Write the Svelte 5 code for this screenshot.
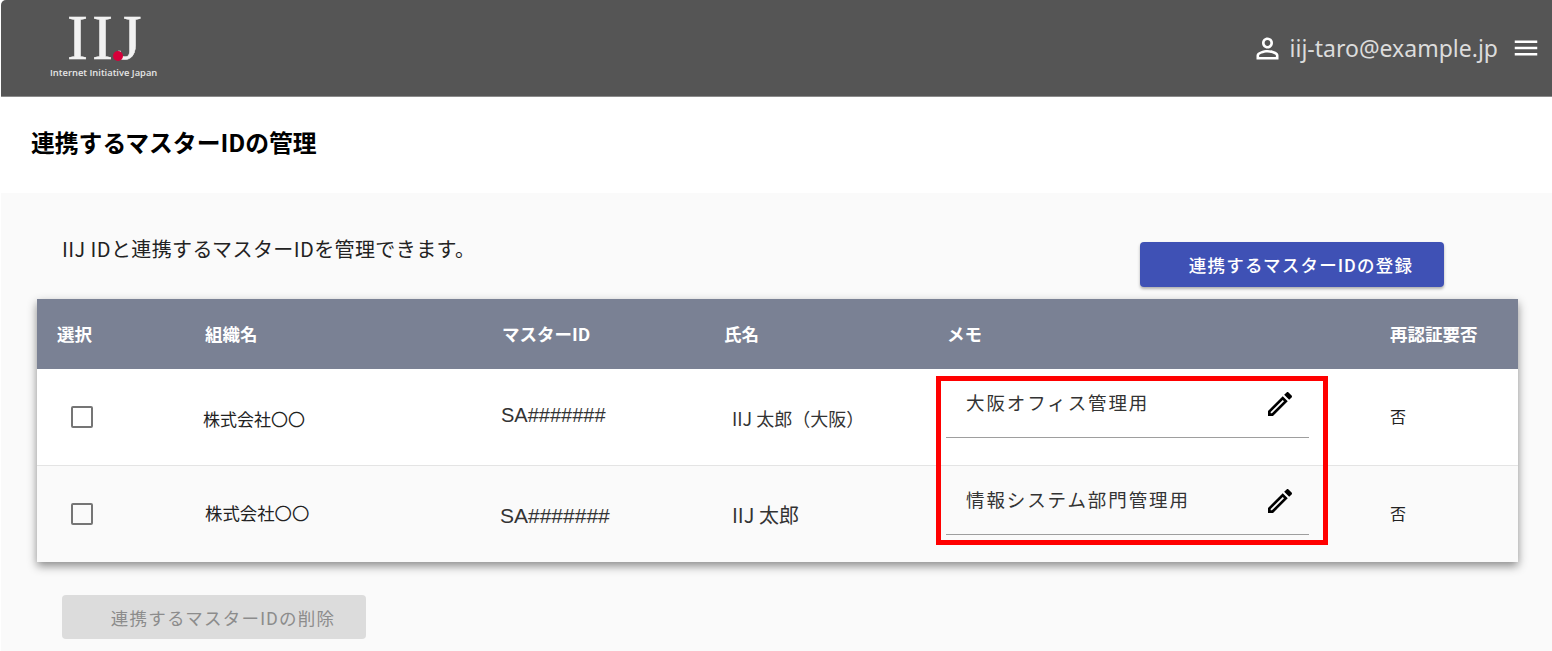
<script>
  const rows = [
    { org: '株式会社〇〇', id: 'SA#######', name: 'IIJ 太郎（大阪）', memo: '大阪オフィス管理用', auth: '否' },
    { org: '株式会社〇〇', id: 'SA#######', name: 'IIJ 太郎', memo: '情報システム部門管理用', auth: '否' }
  ];
</script>

<div class="page">
  <header class="topbar">
    <div class="logo">
      <div class="mark">IIJ<span class="dot"></span></div>
      <div class="tagline">Internet Initiative Japan</div>
    </div>
    <div class="account">
      <svg class="person" viewBox="0 0 24 24"><path d="M12 5.9c1.16 0 2.1.94 2.1 2.1s-.94 2.1-2.1 2.1S9.9 9.16 9.9 8s.94-2.1 2.1-2.1m0 9c2.97 0 6.1 1.46 6.1 2.1v1.1H5.9V17c0-.64 3.13-2.1 6.1-2.1M12 4C9.79 4 8 5.79 8 8s1.79 4 4 4 4-1.79 4-4-1.79-4-4-4zm0 9c-2.67 0-8 1.34-8 4v3h16v-3c0-2.66-5.33-4-8-4z"/></svg>
      <span class="email">iij-taro@example.jp</span>
      <svg class="menu" viewBox="0 0 24 24"><path d="M3 18h18v-2H3v2zm0-5h18v-2H3v2zm0-7v2h18V6H3z"/></svg>
    </div>
  </header>

  <div class="title-bar">
    <h1>連携するマスターIDの管理</h1>
  </div>

  <main class="content">
    <div class="intro-row">
      <p class="intro">IIJ IDと連携するマスターIDを管理できます。</p>
      <button class="btn primary">連携するマスターIDの登録</button>
    </div>

    <div class="table">
      <div class="row head">
        <div>選択</div>
        <div>組織名</div>
        <div>マスターID</div>
        <div>氏名</div>
        <div>メモ</div>
        <div>再認証要否</div>
      </div>
      {#each rows as row, i}
        <div class="row body" class:first={i === 0} class:second={i === 1}>
          <div class="cell-check"><span class="checkbox"></span></div>
          <div class="cell-org">{row.org}</div>
          <div class="cell-id">{row.id}</div>
          <div class="cell-name">{row.name}</div>
          <div class="cell-memo">
            <div class="memo-field">
              <span>{row.memo}</span>
              <svg class="pencil" viewBox="0 0 24 24"><path d="M3 17.25V21h3.75L17.81 9.94l-3.75-3.75L3 17.25zM5.92 19H5v-.92l9.06-9.06.92.92L5.92 19zM20.71 5.63l-2.34-2.34c-.2-.2-.45-.29-.71-.29s-.51.1-.7.29l-1.83 1.83 3.75 3.75 1.83-1.83c.39-.39.39-1.02 0-1.41z"/></svg>
            </div>
          </div>
          <div class="cell-auth">{row.auth}</div>
        </div>
      {/each}
      <div class="highlight"></div>
    </div>

    <button class="btn disabled">連携するマスターIDの削除</button>
  </main>
</div>

<style>
  :global(body) {
    margin: 0;
    background: #fff;
  }

  .page {
    height: 651px;
    overflow: hidden;
    padding-left: 1px;
    font-family: "Noto Sans CJK JP", "Noto Sans", sans-serif;
    color: #222;
  }

  .topbar {
    height: 96px;
    background: #555;
    border-top-left-radius: 5px;
    border-bottom: 1px solid #8a8a8a;
    box-sizing: content-box;
    display: flex;
    align-items: center;
    justify-content: space-between;
    margin-bottom: -1px;
  }

  .logo {
    margin-left: 49px;
    align-self: flex-start;
    width: 120px;
  }

  .mark {
    position: relative;
    width: max-content;
    height: 59px;
    margin: 8px 0 0 17px;
    font-family: "Liberation Serif", serif;
    font-size: 63px;
    line-height: 61px;
    letter-spacing: 4px;
    color: #f2f2f2;
    -webkit-text-stroke: 0.5px #f2f2f2;
  }

  .dot {
    position: absolute;
    left: 46px;
    top: 43px;
    width: 10px;
    height: 10px;
    border-radius: 50%;
    background: #d6003a;
  }

  .tagline {
    font-family: "Open Sans", sans-serif;
    font-size: 9.4px;
    font-weight: 600;
    line-height: 12px;
    color: #e6e6e6;
    white-space: nowrap;
  }

  .account {
    display: flex;
    align-items: center;
    margin-right: 11px;
  }

  .person {
    width: 33px;
    height: 33px;
    fill: #fff;
    margin-right: 6px;
  }

  .email {
    font-family: "Noto Sans", sans-serif;
    font-size: 23px;
    color: #dcdcdc;
  }

  .menu {
    width: 30px;
    height: 30px;
    fill: #fff;
    margin-left: 13px;
  }

  .title-bar {
    height: 97px;
    display: flex;
    align-items: center;
    padding: 0 0 6px 30px;
    box-sizing: border-box;
  }

  h1 {
    margin: 0;
    font-size: 23.8px;
    font-weight: 700;
    color: #000;
  }

  .content {
    background: #fafafa;
    height: 458px;
    padding: 49px 0 0 36px;
    box-sizing: border-box;
  }

  .intro-row {
    display: flex;
    justify-content: space-between;
    align-items: flex-start;
    width: 1407px;
    padding-left: 25px;
    box-sizing: border-box;
    height: 57px;
  }

  .intro {
    margin: -7px 0 0;
    font-size: 20px;
    letter-spacing: 0.4px;
    line-height: 28px;
    color: #222;
  }

  .btn {
    display: block;
    width: 304px;
    height: 45px;
    border: none;
    border-radius: 4px;
    font-family: Roboto, "Noto Sans CJK JP", sans-serif;
    font-size: 17.5px;
    font-weight: 500;
    letter-spacing: 1.25px;
    padding: 0 0 0 18px;
  }

  .primary {
    background: #3f51b5;
    color: #fff;
    box-shadow: 0 2px 3px rgba(0, 0, 0, 0.3);
  }

  .disabled {
    margin: 33px 0 0 25px;
    height: 44px;
    background: #dcdcdc;
    color: #8c8c8c;
    font-weight: 400;
  }

  .table {
    position: relative;
    width: 1481px;
    background: #fff;
    box-shadow: 0 4px 9px rgba(0, 0, 0, 0.45);
  }

  .row {
    display: grid;
    grid-template-columns: 148px 297px 222px 223px 429px 142px;
    padding-left: 20px;
    align-items: center;
    box-sizing: border-box;
  }

  .head {
    height: 70px;
    padding-bottom: 2px;
    background: #7a8194;
    color: #fff;
    font-size: 17.5px;
    font-weight: 700;
  }

  .head div:last-child {
    padding-left: 14px;
  }

  .body {
    height: 96px;
    font-size: 16px;
  }

  .body.first {
    border-bottom: 1px solid #e4e4e4;
    height: 97px;
  }

  .body.second {
    background: #fafafa;
  }

  .checkbox {
    display: block;
    width: 22px;
    height: 22px;
    box-sizing: border-box;
    border: 2.5px solid #757575;
    border-radius: 2px;
    margin-left: 14px;
  }

  .cell-org {
    font-size: 17px;
    margin-left: -2px;
    padding-top: 2px;
  }

  .second .cell-org {
    margin-left: 0;
    padding-top: 0;
    padding-bottom: 4px;
    font-size: 17.4px;
  }

  .cell-id {
    font-family: "Liberation Sans", sans-serif;
    font-size: 20px;
    margin-left: -1px;
    color: #333;
    padding-bottom: 4px;
  }

  .second .cell-id {
    font-size: 21px;
    margin-left: -2px;
    padding-bottom: 0;
    padding-top: 4px;
  }

  .cell-name {
    margin-left: 8px;
    font-size: 18px;
    color: #333;
    padding-top: 2px;
  }

  .second .cell-name {
    padding-top: 0;
    font-size: 20px;
  }

  .cell-memo {
    align-self: start;
    margin-left: -1px;
    width: 363px;
  }

  .memo-field {
    height: 69px;
    padding-left: 20px;
    padding-right: 13px;
    border-bottom: 1px solid #9e9e9e;
    display: flex;
    align-items: center;
    justify-content: space-between;
    box-sizing: border-box;
    font-size: 18.5px;
    letter-spacing: 1.9px;
    color: #333;
  }

  .memo-field span {
    margin-bottom: 3px;
  }

  .pencil {
    width: 32px;
    height: 32px;
    margin-top: 2px;
    fill: #000;
  }

  .cell-auth {
    font-size: 16px;
    padding: 0 0 2px 14px;
  }

  .highlight {
    position: absolute;
    left: 899px;
    top: 77px;
    width: 392px;
    height: 169px;
    box-sizing: border-box;
    border: 5px solid #f00;
    pointer-events: none;
  }
</style>
